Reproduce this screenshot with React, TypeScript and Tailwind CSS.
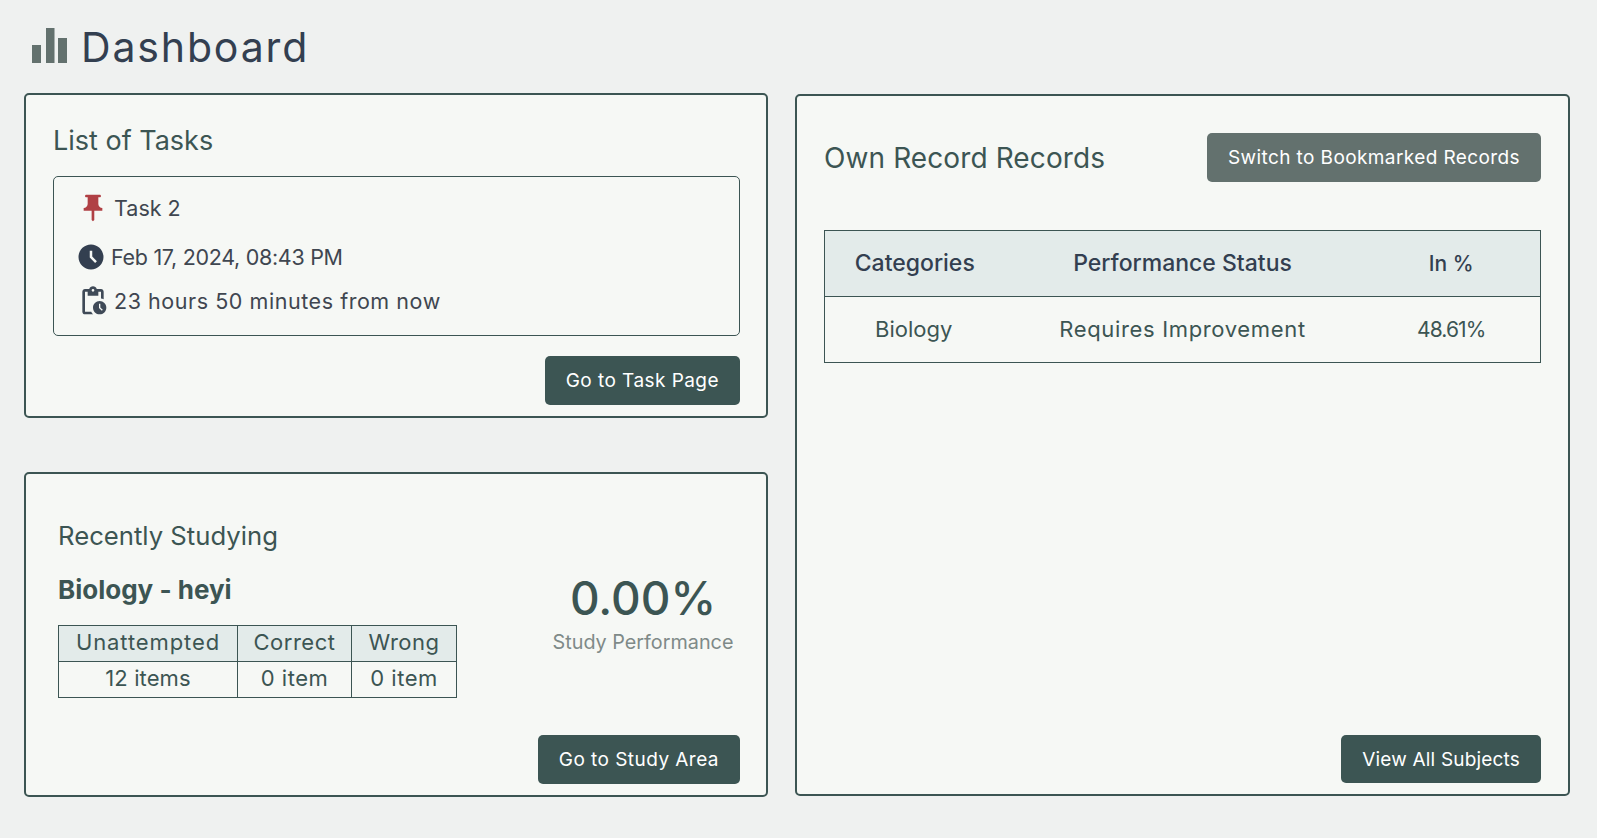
import React from 'react';
import { MdAccessTimeFilled, MdPendingActions, MdPushPin } from 'react-icons/md';

function DarkButton({ children, className = '' }: { children: React.ReactNode; className?: string }) {
  return (
    <button className={`rounded-[5px] bg-[#3c5553] px-[21px] pt-[2px] text-[19px] text-white ${className}`}>
      {children}
    </button>
  );
}

export default function App() {
  return (
    <div className="h-[838px] w-[1597px] overflow-hidden bg-[#eff1f0] pl-[24px] pr-[27px] pt-[20px] font-['Inter','Liberation_Sans',sans-serif] text-[#3c5553]">
      {/* Header */}
      <div className="ml-[8px] flex h-[53px] items-center gap-[14px]">
        <svg className="mb-[2px]" width="35" height="35" viewBox="0 0 35 35" fill="#63716e">
          <rect x="0" y="17" width="9" height="18" />
          <rect x="14" y="0" width="8.5" height="35" />
          <rect x="26" y="10" width="9" height="25" />
        </svg>
        <h1 className="pt-[2px] text-[41px] leading-none tracking-[1.85px] text-[#333f50]">Dashboard</h1>
      </div>

      <div className="mt-[19px] flex gap-[27px]">
        <div className="flex w-[744px] flex-col gap-[54px] pt-[1px]">
          {/* Tasks */}
          <section className="h-[325px] rounded-[5px] border-2 border-[#3c5553] bg-[#f6f8f5] pl-[27px] pr-[26px] pt-[27px]">
            <h2 className="text-[27px] leading-[38px]">List of Tasks</h2>
            <div className="mt-[16px] h-[160px] rounded-[5px] border border-[#3c5553] pl-[23px] pt-[15px] text-[21.5px] text-[#3f4650]">
              <div className="flex h-[32px] items-center gap-[5px]">
                <MdPushPin size={32} className="text-[#b04044]" />
                <span>Task 2</span>
              </div>
              <div className="mt-[19px] flex h-[28px] items-center gap-[5px]">
                <MdAccessTimeFilled size={30} className="-ml-[1px] text-[#333f50]" />
                <span className="tracking-[-0.3px]">Feb 17, 2024, 08:43 PM</span>
              </div>
              <div className="mt-[16px] flex h-[28px] items-center gap-[5px]">
                <MdPendingActions size={32} className="text-[#3f4a57]" />
                <span className="tracking-[0.55px]">23 hours 50 minutes from now</span>
              </div>
            </div>
            <div className="mt-[20px] flex justify-end">
              <DarkButton className="h-[49px] tracking-[0.45px]">Go to Task Page</DarkButton>
            </div>
          </section>

          {/* Recently studying */}
          <section className="h-[325px] rounded-[5px] border-2 border-[#3c5553] bg-[#f6f8f5] pl-[32px] pr-[26px] pt-[44px]">
            <h2 className="text-[25.7px] leading-[36px]">Recently Studying</h2>
            <div className="mt-[16px] flex">
              <div className="w-[440px] pt-[2px]">
                <div className="text-[26px] font-bold leading-[36px]">Biology - heyi</div>
                <table className="mt-[17px] w-[399px] table-fixed border-collapse text-center text-[22px] tracking-[0.5px]">
                  <thead>
                    <tr className="h-[36px] bg-[#e3ebea]">
                      <th className="w-[179px] border border-[#3c5553] pb-[2px] font-normal tracking-[0.9px]">Unattempted</th>
                      <th className="w-[114px] border border-[#3c5553] pb-[2px] font-normal">Correct</th>
                      <th className="border border-[#3c5553] pb-[2px] font-normal">Wrong</th>
                    </tr>
                  </thead>
                  <tbody>
                    <tr className="h-[36px]">
                      <td className="border border-[#3c5553] pb-[2px] tracking-[0.1px]">12 items</td>
                      <td className="border border-[#3c5553] pb-[2px]">0 item</td>
                      <td className="border border-[#3c5553] pb-[2px]">0 item</td>
                    </tr>
                  </tbody>
                </table>
              </div>
              <div className="ml-[50px] mt-[-2px] w-[190px] text-center">
                <div className="text-[46px] font-medium leading-[60px]">0.00%</div>
                <div className="text-[19.8px] text-[#7f8a88]">Study Performance</div>
              </div>
            </div>
            <div className="mt-[37px] flex justify-end">
              <DarkButton className="h-[49px] tracking-[0.45px]">Go to Study Area</DarkButton>
            </div>
          </section>
        </div>

        {/* Records */}
        <section className="mt-[2px] flex h-[702px] w-[775px] flex-col rounded-[5px] border-2 border-[#3c5553] bg-[#f6f8f5] px-[27px] pt-[37px]">
          <div className="flex items-center justify-between">
            <h2 className="pt-[1px] text-[28px] tracking-[0.1px]">Own Record Records</h2>
            <button className="h-[49px] rounded-[5px] bg-[#63716e] px-[21px] pt-[2px] text-[19px] tracking-[0.4px] text-white">
              Switch to Bookmarked Records
            </button>
          </div>
          <table className="mt-[48px] w-full table-fixed border-collapse text-center text-[22px]">
            <thead>
              <tr className="h-[66px] bg-[#e3ebea] text-[23px] text-[#333f50]">
                <th className="w-[178px] border-y border-l border-[#3c5553] pl-[2px] font-medium">Categories</th>
                <th className="border-y border-[#3c5553] font-medium">Performance Status</th>
                <th className="w-[178px] border-y border-r border-[#3c5553] text-[21px] font-medium">In %</th>
              </tr>
            </thead>
            <tbody>
              <tr className="h-[66px]">
                <td className="border-y border-l border-[#3c5553]">Biology</td>
                <td className="border-y border-[#3c5553] tracking-[0.66px]">Requires Improvement</td>
                <td className="border-y border-r border-[#3c5553] text-[21px] tracking-[-0.9px]">48.61%</td>
              </tr>
            </tbody>
          </table>
          <div className="mb-[11px] mt-auto flex justify-end">
            <DarkButton className="h-[48px] tracking-[0.18px]">View All Subjects</DarkButton>
          </div>
        </section>
      </div>
    </div>
  );
}
